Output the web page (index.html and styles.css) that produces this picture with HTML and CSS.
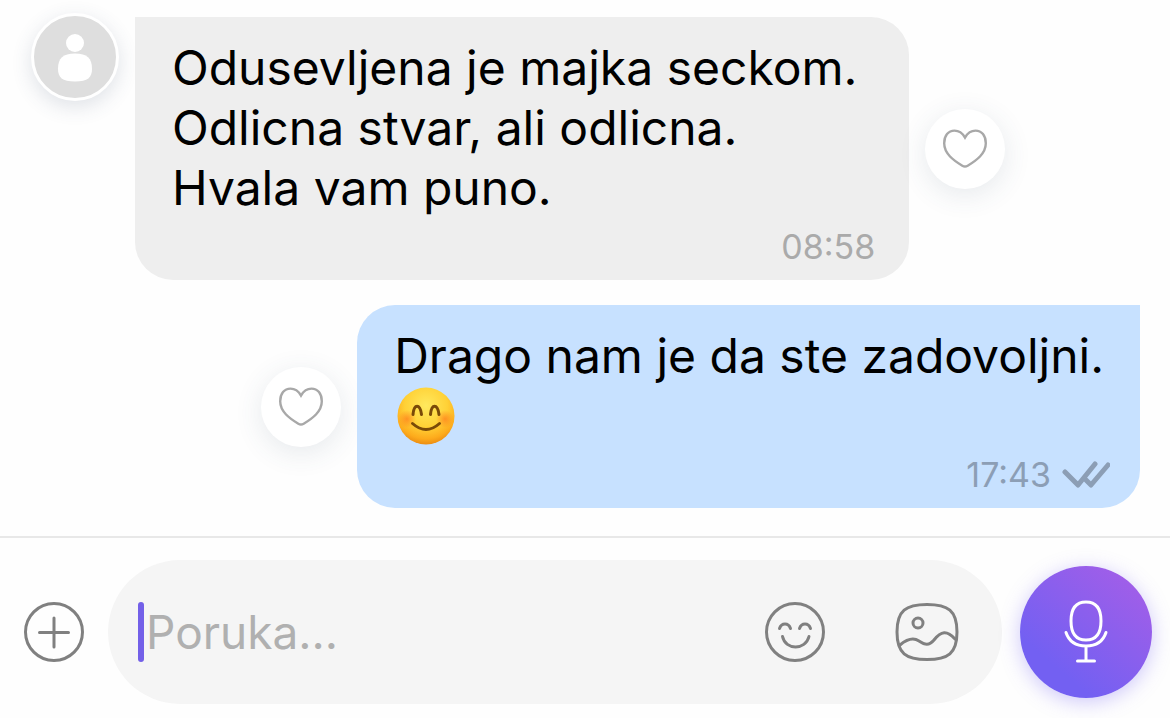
FILE: index.html
```html
<!DOCTYPE html>
<html lang="sr-Latn">
<head>
  <meta charset="UTF-8">
  <meta name="viewport" content="width=device-width, initial-scale=1">
  <title>Poruke</title>
  <link rel="stylesheet" href="styles.css">
</head>
<body>

<main class="chat">
  <div class="message incoming">
    <div class="avatar">
      <svg viewBox="0 0 82 82" width="82" height="82" aria-hidden="true">
        <circle cx="41" cy="27" r="9"/>
        <path d="M41 37.500c12 0 17 5 17 15 0 9-4 13-17 13s-17-4-17-13c0-10 5-15 17-15z"/>
      </svg>
    </div>
    <div class="bubble">
      <p class="text">Odusevljena je majka seckom.<br>Odlicna stvar, ali odlicna.<br>Hvala vam puno.</p>
      <div class="meta"><time>08:58</time></div>
    </div>
    <button type="button" class="btn-like" aria-label="Sviđa mi se">
      <svg viewBox="0 0 48 44" width="46" height="42" aria-hidden="true">
        <path d="M24 10C20.500 4 16.500 2.800 13 2.800 6.500 2.800 2.200 8 2.200 16c0 11 10 18 19 23.500 2 1.200 3.600 1.200 5.600 0 9-5.500 19-12.500 19-23.500 0-8-4.300-13.200-10.800-13.200C31.500 2.800 27.500 4 24 10z"/>
      </svg>
    </button>
  </div>

  <div class="message outgoing">
    <button type="button" class="btn-like" aria-label="Sviđa mi se">
      <svg viewBox="0 0 48 44" width="46" height="42" aria-hidden="true">
        <path d="M24 10C20.500 4 16.500 2.800 13 2.800 6.500 2.800 2.200 8 2.200 16c0 11 10 18 19 23.500 2 1.200 3.600 1.200 5.600 0 9-5.500 19-12.500 19-23.500 0-8-4.300-13.200-10.800-13.200C31.500 2.800 27.500 4 24 10z"/>
      </svg>
    </button>
    <div class="bubble">
      <p class="text">Drago nam je da ste zadovoljni.</p>
      <svg class="emoji" viewBox="0 0 60 60" width="60" height="60" role="img" aria-label="😊">
        <defs>
          <radialGradient id="face" cx="50%" cy="32%" r="68%">
            <stop offset="0" stop-color="#ffe95e"/>
            <stop offset="0.55" stop-color="#ffd136"/>
            <stop offset="0.85" stop-color="#fdab1c"/>
            <stop offset="1" stop-color="#ec8d12"/>
          </radialGradient>
          <radialGradient id="cheek">
            <stop offset="0" stop-color="#ff7a1c" stop-opacity="0.7"/>
            <stop offset="1" stop-color="#ff7a1c" stop-opacity="0"/>
          </radialGradient>
        </defs>
        <circle cx="30" cy="30" r="28.500" fill="url(#face)"/>
        <circle cx="11" cy="33" r="9" fill="url(#cheek)"/>
        <circle cx="49" cy="33" r="9" fill="url(#cheek)"/>
        <path d="M17 28.500c1-11 7-11 8.500 0M34.500 28.500c1-11 7-11 8.500 0" fill="none" stroke="#7a4a08" stroke-width="3" stroke-linecap="round"/>
        <path d="M16.500 37.500q13.500 12 27 0" fill="none" stroke="#7a4a08" stroke-width="3" stroke-linecap="round"/>
      </svg>
      <div class="meta">
        <time>17:43</time>
        <svg viewBox="0 0 48 28" width="48" height="28" aria-hidden="true">
          <path d="M3 11l13 13L33 3M24 19l5 5L46 4"/>
        </svg>
      </div>
    </div>
  </div>
</main>

<form class="composer">
  <button type="button" class="btn-icon" aria-label="Dodaj">
    <svg viewBox="0 0 60 60" width="60" height="60" aria-hidden="true">
      <circle cx="30" cy="30" r="28.500"/>
      <path d="M30 16v29M15.500 30.500h29"/>
    </svg>
  </button>
  <div class="field">
    <span class="caret"></span>
    <input type="text" name="poruka" placeholder="Poruka..." aria-label="Poruka">
    <button type="button" class="btn-icon" aria-label="Emoji">
      <svg viewBox="0 0 60 60" width="60" height="60" aria-hidden="true">
        <circle cx="30" cy="30" r="28.500"/>
        <path d="M14.500 26.500c2-6 9-6 11 0M34.500 26.500c2-6 9-6 11 0M17.500 34.500c3 14 23 14 26.500 0"/>
      </svg>
    </button>
    <button type="button" class="btn-icon" aria-label="Slika">
      <svg viewBox="0 0 64 60" width="64" height="60" aria-hidden="true">
        <path d="M32 2.500c21 0 30 6 30 27.500S53 57.500 32 57.500 2 51.500 2 30 11 2.500 32 2.500z"/>
        <circle cx="23" cy="21" r="5"/>
        <path d="M5 43c6-5 13-8 19-4 6 4 10 5 15-1 7-9 13-10 21-1"/>
      </svg>
    </button>
  </div>
  <button type="button" class="btn-mic" aria-label="Snimi glasovnu poruku">
    <svg viewBox="0 0 44 64" width="44" height="64" aria-hidden="true">
      <path d="M22 2c10 0 15 6 15 19s-5 19-15 19S7 34 7 21 12 2 22 2zM2 32.500c3 9 9 13.500 20 13.500s17-4.500 20-13.500M22 46v14M13.500 61h17"/>
    </svg>
  </button>
</form>

</body>
</html>
```

FILE: styles.css
```css
* {
  box-sizing: border-box;
}

body {
  margin: 0;
  min-height: 100vh;
  display: flex;
  flex-direction: column;
  font-family: Inter, 'Liberation Sans', sans-serif;
  background: #fefefe;
  color: #000;
}

button {
  padding: 0;
  border: none;
  background: none;
  cursor: pointer;
}

svg {
  display: block;
}

.chat {
  flex: 1;
  display: flex;
  flex-direction: column;
  gap: 25px;
  padding: 17px 30px 28px 31px;
}

.message {
  display: flex;
  align-items: center;
  gap: 16px;
}

.outgoing {
  justify-content: flex-end;
}

.avatar {
  align-self: flex-start;
  flex-shrink: 0;
  margin-top: -4px;
  border: 3px solid #fff;
  border-radius: 50%;
  background: #dedede;
  box-shadow: 0 6px 20px rgba(60, 80, 110, 0.16);
}

.avatar svg {
  fill: #fff;
}

.bubble {
  padding: 21px 37px 13px;
}

.incoming .bubble {
  padding-right: 34px;
  border-radius: 0 38px 38px 38px;
  background: #eee;
}

.incoming .text {
  padding-right: 18px;
}

.outgoing .bubble {
  padding-right: 30px;
  border-radius: 38px 0 38px 38px;
  background: #c7e1ff;
}

.outgoing .text {
  padding-right: 6px;
}

.text {
  margin: 0;
  font-size: 48px;
  line-height: 60px;
}

.emoji {
  margin-left: 2px;
}

.meta {
  display: flex;
  justify-content: flex-end;
  align-items: center;
  gap: 11px;
  margin-top: 9px;
  font-size: 34px;
  line-height: 40px;
  color: #aaa;
}

.outgoing .meta {
  color: #8c9eb5;
}

.meta svg {
  fill: none;
  stroke: currentColor;
  stroke-width: 5;
  stroke-linecap: round;
  stroke-linejoin: round;
}

.btn-like {
  flex-shrink: 0;
  display: grid;
  place-items: center;
  width: 80px;
  height: 80px;
  border-radius: 50%;
  background: #fff;
  box-shadow: 0 6px 28px rgba(60, 80, 110, 0.12);
}

.btn-like svg {
  fill: none;
  stroke: #a8a8a8;
  stroke-width: 2.5;
}

.composer {
  display: flex;
  align-items: center;
  gap: 18px;
  padding: 22px 18px 14px 24px;
  border-top: 2px solid #e8e8e8;
}

.btn-icon {
  flex-shrink: 0;
}

.btn-icon svg {
  fill: none;
  stroke: #808080;
  stroke-width: 3;
  stroke-linecap: round;
}

.field {
  flex: 1;
  min-width: 0;
  display: flex;
  align-items: center;
  height: 144px;
  margin-left: 6px;
  padding: 0 43px 0 30px;
  border-radius: 72px;
  background: #f5f5f5;
}

.field .btn-icon + .btn-icon {
  margin-left: 70px;
}

.caret {
  flex-shrink: 0;
  width: 6px;
  height: 60px;
  border-radius: 3px;
  background: #7360e8;
}

.field input {
  flex: 1;
  min-width: 0;
  padding: 0 0 0 2px;
  border: none;
  outline: none;
  background: none;
  font-family: inherit;
  font-size: 46px;
  line-height: 60px;
  color: #000;
  caret-color: #7360e8;
}

.field input::placeholder {
  color: #b0b0b0;
  opacity: 1;
}

.btn-mic {
  flex-shrink: 0;
  display: grid;
  place-items: center;
  width: 132px;
  height: 132px;
  border-radius: 50%;
  background: linear-gradient(40deg, #7360f2 25%, #a25ee8 90%);
  box-shadow: 0 4px 20px rgba(115, 96, 242, 0.35);
}

.btn-mic svg {
  fill: none;
  stroke: #fff;
  stroke-width: 3;
  stroke-linecap: round;
}
```
